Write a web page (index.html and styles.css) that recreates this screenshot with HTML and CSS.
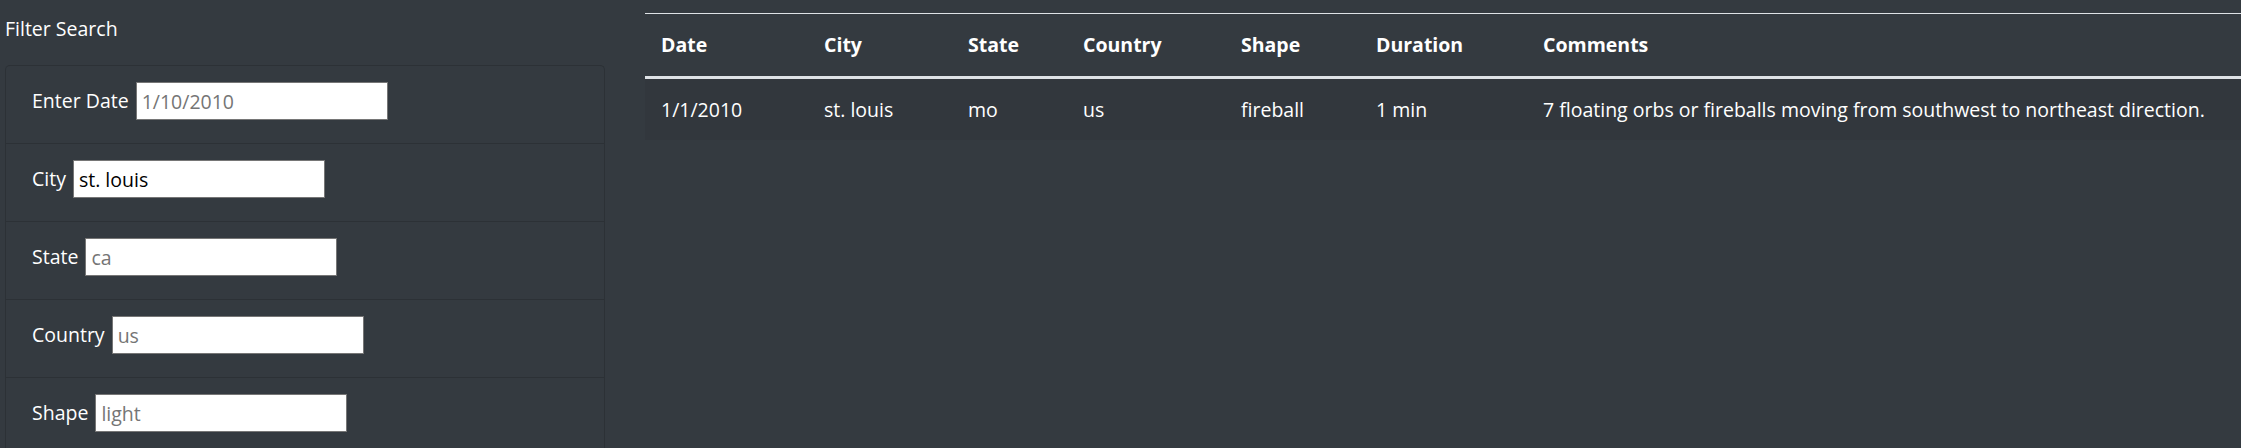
FILE: index.html
```html
<!DOCTYPE html>
<html lang="en">
<head>
<meta charset="utf-8">
<title>UFO Sightings</title>
<link rel="stylesheet" href="styles.css">
</head>
<body>
<div class="page">
  <aside class="filters">
    <h2 class="filters-title">Filter Search</h2>
    <ul class="filter-list">
      <li class="filter-item">
        <label class="filter-label" for="datetime">Enter Date</label>
        <input class="filter-input" id="datetime" type="text" placeholder="1/10/2010">
      </li>
      <li class="filter-item">
        <label class="filter-label" for="city">City</label>
        <input class="filter-input" id="city" type="text" value="st. louis">
      </li>
      <li class="filter-item">
        <label class="filter-label" for="state">State</label>
        <input class="filter-input" id="state" type="text" placeholder="ca">
      </li>
      <li class="filter-item">
        <label class="filter-label" for="country">Country</label>
        <input class="filter-input" id="country" type="text" placeholder="us">
      </li>
      <li class="filter-item">
        <label class="filter-label" for="shape">Shape</label>
        <input class="filter-input" id="shape" type="text" placeholder="light">
      </li>
    </ul>
  </aside>
  <main class="results">
    <table class="ufo-table">
      <colgroup>
        <col class="c-date"><col class="c-city"><col class="c-state"><col class="c-country"><col class="c-shape"><col class="c-duration"><col class="c-comments">
      </colgroup>
      <thead>
        <tr>
          <th>Date</th>
          <th>City</th>
          <th>State</th>
          <th>Country</th>
          <th>Shape</th>
          <th>Duration</th>
          <th>Comments</th>
        </tr>
      </thead>
      <tbody>
        <tr>
          <td>1/1/2010</td>
          <td>st. louis</td>
          <td>mo</td>
          <td>us</td>
          <td>fireball</td>
          <td>1 min</td>
          <td>7 floating orbs or fireballs moving from southwest to northeast direction.</td>
        </tr>
      </tbody>
    </table>
  </main>
</div>
</body>
</html>
```

FILE: styles.css
```css
html, body {
  margin: 0;
  padding: 0;
  background: #343a40;
}

body {
  color: #ffffff;
  font-family: "Open Sans", "Noto Sans", "Liberation Sans", sans-serif;
  font-size: 19.5px;
  overflow: hidden;
}

.page {
  display: flex;
  align-items: flex-start;
  padding-left: 5px;
}

.filters {
  width: 600px;
  flex: none;
}

.filters-title {
  margin: 0;
  padding-top: 16px;
  font-size: 19.5px;
  font-weight: 400;
  line-height: 26px;
  height: 65px;
  box-sizing: border-box;
}

.filter-list {
  list-style: none;
  margin: 0;
  padding: 0;
  border: 1px solid #2c3136;
  border-bottom: none;
  border-radius: 5px 5px 0 0;
}

.filter-item {
  display: flex;
  align-items: center;
  box-sizing: border-box;
  padding: 16px 0 23px 26px;
  border-top: 1px solid #2c3136;
}

.filter-item:first-child {
  border-top: none;
}

.filter-label {
  margin-right: 7px;
  line-height: 26px;
}

.filter-input {
  width: 252px;
  height: 38px;
  box-sizing: border-box;
  border: 1px solid #767676;
  border-radius: 0;
  padding: 0 5px;
  margin: 0;
  background: #ffffff;
  color: #000000;
  font-family: inherit;
  font-size: 19.5px;
}

.filter-input::placeholder {
  color: #757575;
  opacity: 1;
}

.results {
  margin-left: 40px;
  flex: 1;
  padding-top: 13px;
}

.ufo-table {
  width: 1596px;
  table-layout: fixed;
  border-collapse: collapse;
  border-spacing: 0;
}

.c-date { width: 163px; }
.c-city { width: 144px; }
.c-state { width: 115px; }
.c-country { width: 158px; }
.c-shape { width: 135px; }
.c-duration { width: 167px; }
.c-comments { width: auto; }

.ufo-table th {
  text-align: left;
  font-weight: 700;
  padding: 16px 16px;
  line-height: 30px;
  border-top: 1px solid #dee2e6;
  border-bottom: 3px solid #dee2e6;
  white-space: nowrap;
}

.ufo-table td {
  padding: 16px 16px 15px;
  line-height: 30px;
  background: #32373d;
  white-space: nowrap;
}
```
